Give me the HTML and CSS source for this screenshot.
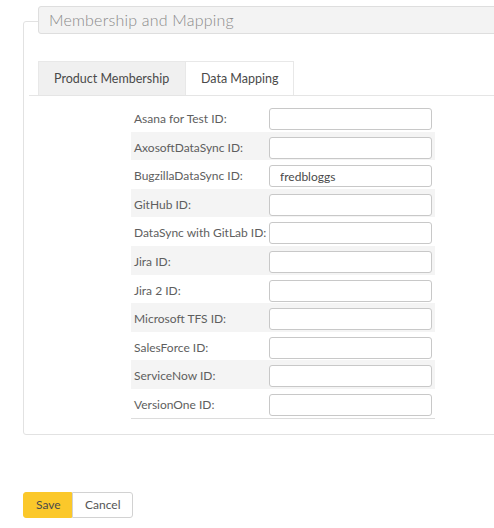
FILE: index.html
```html
<!DOCTYPE html>
<html>
<head>
<meta charset="utf-8">
<link rel="stylesheet" href="styles.css">
</head>
<body>
<div class="page">
  <section class="group">
    <div class="legend">Membership and Mapping</div>
    <div class="tabs">
      <div class="tab first">Product Membership</div>
      <div class="tab active">Data Mapping</div>
    </div>
    <div class="form">
      <div class="row"><span class="label">Asana for Test ID:</span><input class="field" type="text"></div>
      <div class="row alt"><span class="label">AxosoftDataSync ID:</span><input class="field" type="text"></div>
      <div class="row"><span class="label">BugzillaDataSync ID:</span><input class="field" type="text" value="fredbloggs"></div>
      <div class="row alt"><span class="label">GitHub ID:</span><input class="field" type="text"></div>
      <div class="row"><span class="label">DataSync with GitLab ID:</span><input class="field" type="text"></div>
      <div class="row alt"><span class="label">Jira ID:</span><input class="field" type="text"></div>
      <div class="row"><span class="label">Jira 2 ID:</span><input class="field" type="text"></div>
      <div class="row alt"><span class="label">Microsoft TFS ID:</span><input class="field" type="text"></div>
      <div class="row"><span class="label">SalesForce ID:</span><input class="field" type="text"></div>
      <div class="row alt"><span class="label">ServiceNow ID:</span><input class="field" type="text"></div>
      <div class="row last"><span class="label">VersionOne ID:</span><input class="field" type="text"></div>
    </div>
  </section>
  <div class="actions">
    <button class="btn primary">Save</button><button class="btn">Cancel</button>
  </div>
</div>
</body>
</html>
```
FILE: styles.css
```css
html, body { margin: 0; padding: 0; background: #fff; overflow: hidden; }
body { font-family: Lato, "Open Sans", sans-serif; color: #555; }
.page { padding-left: 23px; padding-top: 21px; width: 540px; }
.group {
  border: 1px solid #e2e2e2;
  border-radius: 3px;
  padding-bottom: 15px;
}
.legend {
  margin-top: -16px;
  margin-left: 14px;
  height: 26px;
  line-height: 26px;
  border: 1px solid #dedede;
  border-radius: 3px;
  background: #f3f3f3;
  padding-left: 10px;
  font-size: 16px;
  font-weight: 300;
  color: #8a8a8a;
  letter-spacing: 0.2px;
}
.tabs {
  display: flex;
  margin-top: 27px;
  margin-left: 5px;
  padding-left: 9px;
  border-bottom: 1px solid #e5e5e5;
}
.tab {
  box-sizing: border-box;
  height: 34px;
  line-height: 34px;
  padding: 0 0 0 15px;
  white-space: nowrap;
  font-size: 12.5px;
  color: #4a4a4a;
  background: #f0f0f0;
  border: 1px solid #e8e8e8;
  border-bottom: none;
}
.tab.first { width: 148px; }
.tab.active { background: #fff; border-left: none; width: 108px; padding-left: 15px; }
.form {
  margin-top: 7px;
  margin-left: 107px;
  width: 304px;
  border-bottom: 1px solid #dcdcdc;
}
.row {
  display: flex;
  align-items: flex-start;
  height: 28.6px;
}
.row.alt { background: #f4f4f4; }
.label {
  width: 135px;
  padding-left: 3px;
  padding-top: 1px;
  font-size: 12px;
  line-height: 29px;
  color: #5e5e5e;
  white-space: nowrap;
}
.field {
  box-sizing: border-box;
  width: 163px;
  height: 22px;
  margin: 5px 0 0;
  border: 1px solid #c8c8c8;
  border-radius: 3px;
  padding: 0 10px;
  font-family: Lato, "Open Sans", sans-serif;
  font-size: 12px;
  color: #4a4a4a;
  background: #fff;
}
.actions { display: flex; margin-top: 57px; }
.btn {
  height: 26px;
  padding: 0 12px;
  border: 1px solid #d2d2d2;
  background: #fff;
  font-family: Lato, "Open Sans", sans-serif;
  font-size: 12px;
  color: #555;
  border-radius: 0 3px 3px 0;
  margin: 0;
}
.btn.primary {
  background: #fbc82a;
  border-color: #fbc82a;
  border-radius: 3px 0 0 3px;
  color: #4a4a4a;
  width: 49px;
}
```
